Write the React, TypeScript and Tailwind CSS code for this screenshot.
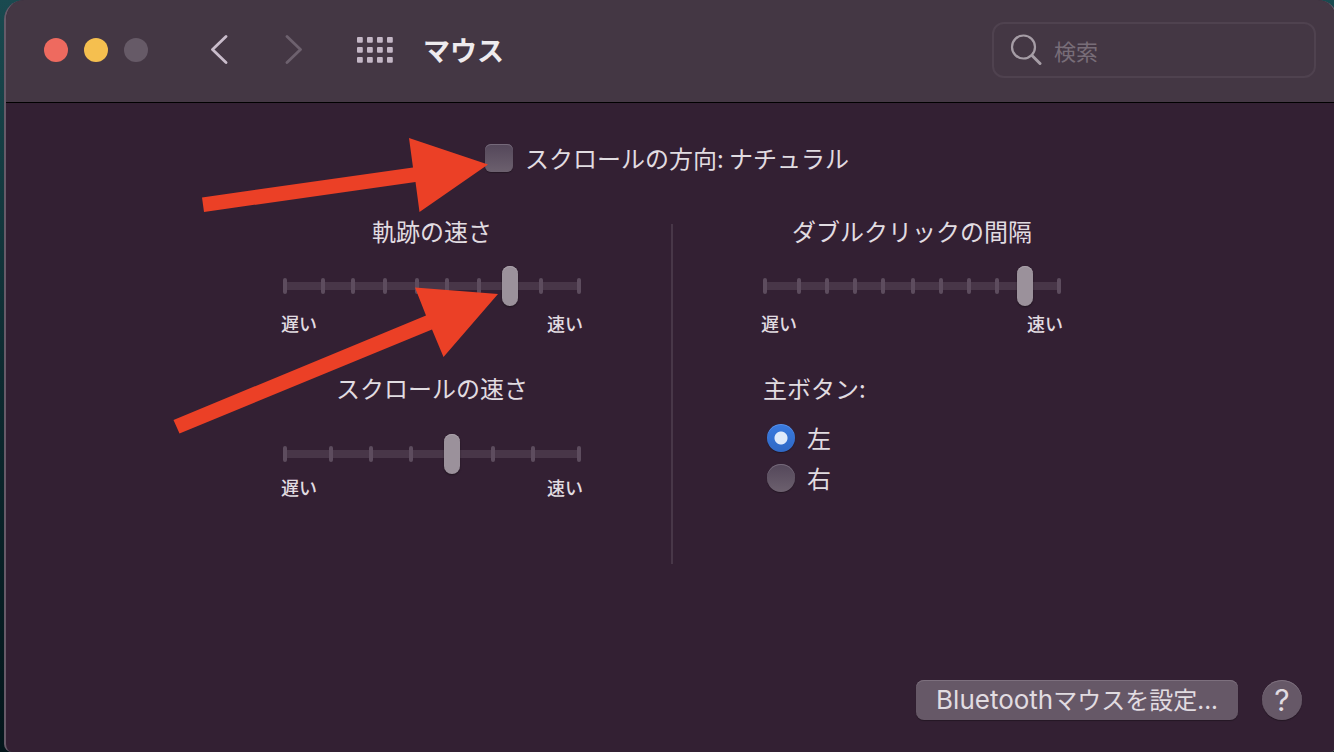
import { useState } from "react";

interface TickSliderProps {
  label: string;
  ticks: number[];
  initial: number;
  titleGap: string;
  labelGap: string;
}

// Length of the slider scale; tick positions and values share this unit
const SCALE = 298;

function TickSlider({ label, ticks, initial, titleGap, labelGap }: TickSliderProps) {
  const [value, setValue] = useState(initial);

  return (
    <label className="block">
      <span className="block text-center text-2xl leading-8">{label}</span>
      <span className={`relative mx-0.5 flex h-10 items-center ${titleGap}`}>
        <span className="h-2 w-full bg-[#483648]" />
        {ticks.map((tick) => (
          <span
            key={tick}
            className="absolute top-3 h-4 w-1 -translate-x-1/2 rounded-sm bg-[#5d4c5e]"
            style={{ left: `${(tick / SCALE) * 100}%` }}
          />
        ))}
        <input
          type="range"
          min={0}
          max={SCALE}
          value={value}
          onChange={(e) => setValue(Number(e.target.value))}
          className="absolute inset-y-0 -left-2 h-10 w-[calc(100%+16px)] appearance-none bg-transparent [&::-webkit-slider-thumb]:h-10 [&::-webkit-slider-thumb]:w-4 [&::-webkit-slider-thumb]:appearance-none [&::-webkit-slider-thumb]:rounded-full [&::-webkit-slider-thumb]:bg-[#9b919b] [&::-webkit-slider-thumb]:shadow-[0_1px_2px_rgba(0,0,0,0.4),inset_0_1px_0_#aaa1aa]"
        />
      </span>
      <span className={`flex justify-between text-lg leading-6 font-medium ${labelGap}`}>
        <span>遅い</span>
        <span>速い</span>
      </span>
    </label>
  );
}

function TitleBar() {
  return (
    <header className="flex h-[103px] items-center border-b border-black bg-[#443744] pr-5 pb-0.5 pl-[38px]">
      <div className="flex gap-4">
        <button aria-label="閉じる" className="h-6 w-6 rounded-full bg-[#ee6a5f]" />
        <button aria-label="しまう" className="h-6 w-6 rounded-full bg-[#f5bf4f]" />
        <button aria-label="拡大" disabled className="h-6 w-6 rounded-full bg-[#665a67]" />
      </div>

      <nav className="ml-[62px] flex items-center">
        <button aria-label="戻る" className="text-[#c9bccb]">
          <svg width="18" height="30" viewBox="0 0 18 30" fill="none" stroke="currentColor" strokeWidth="2.8" strokeLinecap="round" strokeLinejoin="round">
            <path d="M16 1.5 2.5 14.5 16 27.5" />
          </svg>
        </button>
        <button aria-label="進む" disabled className="ml-[57px] text-[#6d616e]">
          <svg width="18" height="30" viewBox="0 0 18 30" fill="none" stroke="currentColor" strokeWidth="2.8" strokeLinecap="round" strokeLinejoin="round">
            <path d="M2 1.5 15.5 14.5 2 27.5" />
          </svg>
        </button>
        <button aria-label="すべてを表示" className="ml-[54px] text-[#c4b7c6]">
          <svg width="36" height="26" viewBox="0 0 36 26" fill="currentColor">
            {[0, 10, 20].map((y) =>
              [0, 10, 20, 30].map((x) => (
                <rect key={`${x}-${y}`} x={x} y={y} width="5.8" height="5.8" rx="1" />
              ))
            )}
          </svg>
        </button>
      </nav>

      <h1 className="ml-[30px] text-[27px] leading-8 font-bold text-[#eeebee]">マウス</h1>

      <label className="ml-auto flex h-14 w-[324px] items-center rounded-xl border-2 border-[#4f424f] pl-4">
        <svg className="shrink-0" width="32" height="32" viewBox="0 0 32 32" fill="none" stroke="#a69da6" strokeLinecap="round">
          <circle cx="13.5" cy="13" r="11.5" strokeWidth="2.2" />
          <path d="m22 21.5 8 8" strokeWidth="3" />
        </svg>
        <input
          type="search"
          aria-label="検索"
          placeholder="検索"
          className="ml-3 w-full min-w-0 bg-transparent text-[22px] leading-8 outline-none placeholder:text-[#786d78]"
        />
      </label>
    </header>
  );
}

function Arrows() {
  return (
    <svg
      className="pointer-events-none absolute top-0 -left-[110px]"
      width="340"
      height="340"
      viewBox="169 103 340 340"
      fill="#eb4026"
      aria-hidden="true"
    >
      <path d="M202 197.5 413 167.5 409 138 488 164.5 419.5 212 415.5 182 204 212Z" />
      <path d="M173.5 420 426 315.5 415 287.5 498 294 443.5 357 432 329.5 179.5 433.5Z" />
    </svg>
  );
}

export default function App() {
  const [natural, setNatural] = useState(false);
  const [primary, setPrimary] = useState<"left" | "right">("left");

  const radioClass =
    "h-7 w-7 appearance-none rounded-full bg-linear-to-b from-[#54475a] to-[#6c606e] shadow-[0_1px_1px_rgba(0,0,0,0.3),inset_0_1px_0_#75697a] checked:bg-[radial-gradient(circle,#dfeafa_0_6px,transparent_7px),linear-gradient(#3a7be0,#2f68c4)] checked:shadow-[0_1px_1px_rgba(0,0,0,0.3),inset_0_1px_0_#5a92ea]";

  return (
    <div className="overflow-hidden bg-linear-to-b from-[#1a4a50] via-[#0d2a30] to-[#04161b] pl-1 font-['Noto_Sans_CJK_JP',sans-serif] text-[#e1dce1]">
      <div className="-mr-1 flex min-h-screen flex-col overflow-hidden rounded-[20px] rounded-b-lg border-x-2 border-[#665a68] bg-[#332033]">
        <TitleBar />

        <main className="relative mx-auto w-[784px] pt-[41px] pl-0.5">
          <div className="flex justify-center pr-2.5">
            <label className="flex h-7 items-center gap-3 text-2xl leading-7">
              <input
                type="checkbox"
                checked={natural}
                onChange={(e) => setNatural(e.target.checked)}
                className="h-7 w-7 appearance-none rounded-md bg-linear-to-b from-[#54475a] to-[#6c606e] shadow-[0_1px_1px_rgba(0,0,0,0.3),inset_0_1px_0_#75697a] checked:bg-[#3a7be0] checked:bg-none"
              />
              スクロールの方向: ナチュラル
            </label>
          </div>

          <div className="mt-[43px] flex justify-between">
            <section className="w-[302px]">
              <TickSlider
                label="軌跡の速さ"
                ticks={[2, 40, 70, 102, 134, 164, 196, 258, 296]}
                initial={227}
                titleGap="mt-[19px]"
                labelGap="mt-[5px]"
              />
              <div className="mt-[37px]">
                <TickSlider
                  label="スクロールの速さ"
                  ticks={[2, 48, 88, 128, 210, 250, 296]}
                  initial={169}
                  titleGap="mt-[30px]"
                  labelGap="mt-px"
                />
              </div>
            </section>

            <div className="mt-[9px] h-[340px] w-0.5 bg-[#483748]" />

            <section className="w-[302px]">
              <TickSlider
                label="ダブルクリックの間隔"
                ticks={[2, 36, 64, 92, 120, 150, 178, 206, 234, 296]}
                initial={262}
                titleGap="mt-[19px]"
                labelGap="mt-[5px]"
              />
              <fieldset className="mt-[37px] pl-0.5 text-2xl">
                <legend className="leading-8">主ボタン:</legend>
                <label className="mt-5 flex h-7 items-center gap-3 pl-1 leading-7">
                  <input
                    type="radio"
                    name="primary-button"
                    checked={primary === "left"}
                    onChange={() => setPrimary("left")}
                    className={radioClass}
                  />
                  左
                </label>
                <label className="mt-3 flex h-7 items-center gap-3 pl-1 leading-7">
                  <input
                    type="radio"
                    name="primary-button"
                    checked={primary === "right"}
                    onChange={() => setPrimary("right")}
                    className={radioClass}
                  />
                  右
                </label>
              </fieldset>
            </section>
          </div>

          <Arrows />
        </main>

        <footer className="mt-auto flex justify-end gap-6 pr-[34px] pb-8">
          <button className="h-10 rounded-lg bg-[#665867] px-5 font-['Inter','Noto_Sans_CJK_JP',sans-serif] text-2xl leading-8 shadow-[0_1px_1px_rgba(0,0,0,0.3),inset_0_1px_0_#7d707e]">
            <span className="text-[26px]">Bluetooth</span>マウスを設定...
          </button>
          <button
            aria-label="ヘルプ"
            className="h-10 w-10 rounded-full bg-[#665867] font-['Inter',sans-serif] text-3xl leading-8 shadow-[0_1px_1px_rgba(0,0,0,0.3),inset_0_1px_0_#7d707e]"
          >
            ?
          </button>
        </footer>
      </div>
    </div>
  );
}
